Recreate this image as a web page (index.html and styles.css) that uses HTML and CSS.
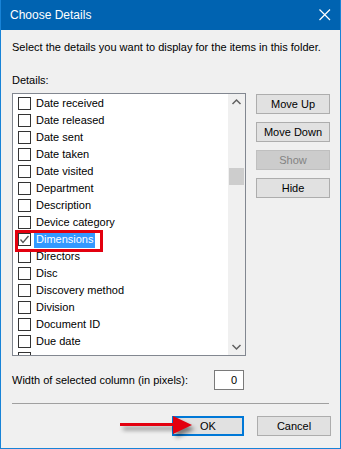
FILE: index.html
```html
<!DOCTYPE html>
<html lang="en">
<head>
  <meta charset="UTF-8" />
  <title>Choose Details</title>
  <link rel="stylesheet" href="styles.css">
</head>
<body>

<div class="window">
  <div class="titlebar">
    <span class="title">Choose Details</span>
    <svg class="close" width="12" height="12" viewBox="0 0 12 12">
      <path d="M0.5 0.5 L11 11 M11 0.5 L0.5 11" stroke="#fff" stroke-width="1.2" fill="none"/>
    </svg>
  </div>

  <div class="content">
    <p class="intro">Select the details you want to display for the items in this folder.</p>
    <div class="label">Details:</div>

    <div class="main">
      <div class="listbox">
        <div class="items">
          <div class="row"><span class="box"></span><span class="text">Date received</span></div>
          <div class="row"><span class="box"></span><span class="text">Date released</span></div>
          <div class="row"><span class="box"></span><span class="text">Date sent</span></div>
          <div class="row"><span class="box"></span><span class="text">Date taken</span></div>
          <div class="row"><span class="box"></span><span class="text">Date visited</span></div>
          <div class="row"><span class="box"></span><span class="text">Department</span></div>
          <div class="row"><span class="box"></span><span class="text">Description</span></div>
          <div class="row"><span class="box"></span><span class="text">Device category</span></div>
          <div class="row selected">
            <span class="box">
              <svg width="11" height="11" viewBox="0 0 11 11"><path d="M1.5 5.5 L4 8.5 L9.5 2" stroke="#555" stroke-width="1.3" fill="none"/></svg>
            </span>
            <span class="text">Dimensions</span>
          </div>
          <div class="row"><span class="box"></span><span class="text">Directors</span></div>
          <div class="row"><span class="box"></span><span class="text">Disc</span></div>
          <div class="row"><span class="box"></span><span class="text">Discovery method</span></div>
          <div class="row"><span class="box"></span><span class="text">Division</span></div>
          <div class="row"><span class="box"></span><span class="text">Document ID</span></div>
          <div class="row"><span class="box"></span><span class="text">Due date</span></div>
          <div class="row"><span class="box"></span></div>
        </div>
        <div class="scrollbar">
          <svg class="arrow" width="17" height="17" viewBox="0 0 17 17"><path d="M4.5 10 L8.5 6 L12.5 10" stroke="#606060" stroke-width="1.5" fill="none"/></svg>
          <div class="track"><div class="thumb"></div></div>
          <svg class="arrow" width="17" height="17" viewBox="0 0 17 17"><path d="M4.5 7 L8.5 11 L12.5 7" stroke="#606060" stroke-width="1.5" fill="none"/></svg>
        </div>
      </div>

      <div class="side-buttons">
        <button class="btn">Move Up</button>
        <button class="btn">Move Down</button>
        <button class="btn" disabled>Show</button>
        <button class="btn">Hide</button>
      </div>
    </div>

    <div class="width-row">
      <span>Width of selected column (in pixels):</span>
      <div class="num">0</div>
    </div>

    <div class="sep"></div>

    <div class="footer">
      <button class="btn ok">OK</button>
      <button class="btn">Cancel</button>
    </div>
  </div>

  <!-- annotations -->
  <div class="callout"></div>
  <svg class="pointer" width="90" height="36" viewBox="0 0 90 36">
    <path d="M5 14.5 L62 14.5" stroke="#e3000f" stroke-width="3" fill="none"/>
    <path d="M58 6 L77 15 L58 24 Z" fill="#e3000f"/>
  </svg>
</div>

</body>
</html>
```

FILE: styles.css
```css
* {
  margin: 0;
  padding: 0;
  box-sizing: border-box;
}

body {
  font-family: "Liberation Sans", Arial, sans-serif;
  font-size: 11px;
  color: #000;
  background: #f0f0f0;
}

.window {
  position: relative;
  width: 341px;
  height: 449px;
  overflow: hidden;
  background: #f0f0f0;
  border: 1px solid #1883d7;
  border-top: none;
}

.titlebar {
  height: 30px;
  margin: 0 -1px;
  background: #0063b1;
  color: #fff;
  display: flex;
  align-items: center;
  justify-content: space-between;
  padding: 0 10px 1px 10px;
}

.title {
  font-size: 12px;
}

.close {
  margin-top: 1px;
}

.content {
  padding: 10px 9px 0 11px;
}

.intro {
  line-height: 15px;
  white-space: nowrap;
}

.label {
  line-height: 15px;
  margin-top: 18px;
}

.main {
  display: flex;
  margin-top: 5px;
}

.listbox {
  width: 234px;
  height: 263px;
  background: #fff;
  border: 1px solid #828790;
  display: flex;
  overflow: hidden;
}

.items {
  flex: 1;
  padding-top: 1px;
}

.row {
  height: 17px;
  display: flex;
  align-items: center;
  padding-left: 5px;
}

.box {
  flex-shrink: 0;
  width: 13px;
  height: 13px;
  border: 1px solid #333;
  background: #fff;
  display: flex;
  align-items: center;
  justify-content: center;
}

.text {
  margin-left: 3px;
  padding: 0 2px;
  line-height: 17px;
  white-space: nowrap;
}

.selected .text {
  background: #3399ff;
  color: #fff;
}

.scrollbar {
  width: 17px;
  background: #f0f0f0;
  display: flex;
  flex-direction: column;
}

.arrow {
  display: block;
}

.track {
  flex: 1;
  padding-top: 57px;
}

.thumb {
  width: 15px;
  height: 17px;
  margin-left: 1px;
  background: #cdcdcd;
}

.side-buttons {
  display: flex;
  flex-direction: column;
  gap: 8px;
  margin-left: 10px;
  margin-top: 1px;
}

.btn {
  width: 74px;
  height: 20px;
  font-family: inherit;
  font-size: 11px;
  color: #000;
  background: #e1e1e1;
  border: 1px solid #adadad;
}

.btn:disabled {
  background: #cccccc;
  border-color: #bfbfbf;
  color: #838383;
}

.width-row {
  width: 232px;
  height: 20px;
  margin-top: 14px;
  display: flex;
  align-items: center;
  justify-content: space-between;
  white-space: nowrap;
}

.num {
  width: 30px;
  height: 20px;
  background: #fff;
  border: 1px solid #7a7a7a;
  text-align: right;
  padding-right: 6px;
  line-height: 18px;
}

.sep {
  height: 1px;
  width: 317px;
  background: #a0a0a0;
  margin-top: 13px;
}

.footer {
  display: flex;
  justify-content: flex-end;
  margin-top: 12px;
}

.btn.ok {
  width: 72px;
  margin-right: 13px;
  border: 2px solid #0078d7;
}

.callout {
  position: absolute;
  left: 14px;
  top: 230px;
  width: 88px;
  height: 22px;
  border: 3px solid #e3000f;
}

.pointer {
  position: absolute;
  left: 114px;
  top: 410px;
  filter: drop-shadow(3px 4px 2px rgba(0, 0, 0, 0.45));
}
```
